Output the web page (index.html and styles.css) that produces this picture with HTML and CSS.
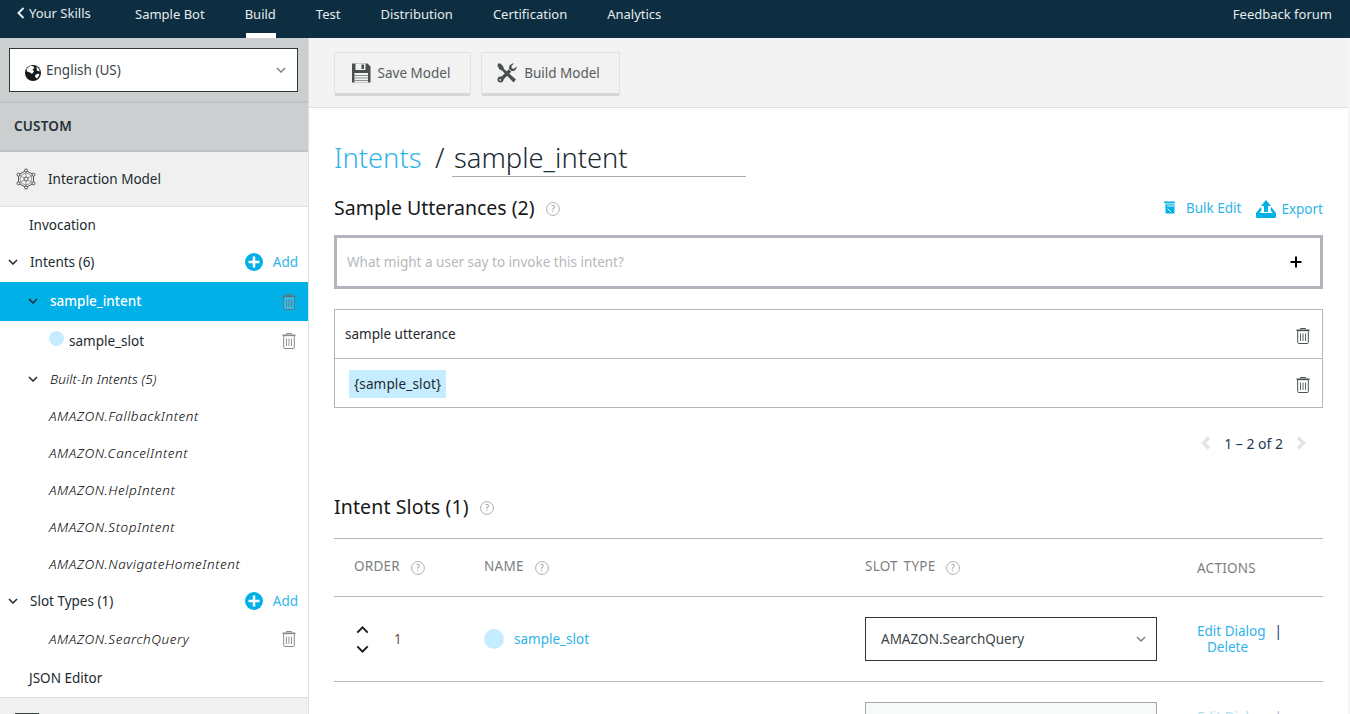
FILE: index.html
```html
<!DOCTYPE html>
<html lang="en">
<head>
<meta charset="utf-8">
<title>Build - Sample Bot</title>
<link rel="stylesheet" href="styles.css">
</head>
<body>
<svg class="defs" width="0" height="0" aria-hidden="true">
  <symbol id="trash" viewBox="0 0 14 16">
    <path d="M4.500 1.500V.5h5v1" fill="none" stroke="currentColor"/>
    <path d="M.5 1.500h13v1.700H.5z" fill="currentColor"/>
    <path d="M1.700 3.200v11.400c0 .5.300.9.900.9h8.800c.6 0 .9-.4.900-.9V3.200" fill="#fff" fill-opacity=".2" stroke="currentColor"/>
    <path d="M4.500 5.500v7.500M7 5.500v7.500M9.500 5.500v7.500" stroke="currentColor" stroke-width=".9"/>
  </symbol>
  <symbol id="chev" viewBox="0 0 10 6">
    <path d="M1 1l4 4 4-4" fill="none" stroke="currentColor" stroke-width="1.500"/>
  </symbol>
  <symbol id="help" viewBox="0 0 14 14">
    <circle cx="7" cy="7" r="6.400" fill="none" stroke="#a9afb0"/>
    <text x="7" y="10" text-anchor="middle" font-size="8.500" font-family="Noto Sans" fill="#8a9091">?</text>
  </symbol>
  <symbol id="addc" viewBox="0 0 18 18">
    <circle cx="9" cy="9" r="9" fill="#00b0e6"/>
    <path d="M9 3.500v11M3.500 9h11" stroke="#fff" stroke-width="2.600"/>
  </symbol>
</svg>

<header class="topbar">
  <a class="back"><svg class="back-chev" viewBox="0 0 8 12"><path d="M6.500 1L1.500 6l5 5" fill="none" stroke="currentColor" stroke-width="2"/></svg>Your Skills</a>
  <a class="tab">Sample Bot</a>
  <a class="tab tab-active">Build</a>
  <a class="tab">Test</a>
  <a class="tab">Distribution</a>
  <a class="tab">Certification</a>
  <a class="tab">Analytics</a>
  <a class="feedback">Feedback forum</a>
</header>

<div class="layout">
  <aside class="sidebar">
    <div class="lang-wrap">
      <div class="lang-select">
        <svg class="globe" viewBox="0 0 16 16"><circle cx="8" cy="8" r="8" fill="#16191a"/><path d="M5.500 .4L8.500 1.500 9.500 3 7.500 4.500 9 6.500 7 9 5 7.500 2 6.500 1.500 4zM10 10l3.500-1.500 1 1.500-2.500 3.500-1.500-1zM11.500 1.500l2.500 2.500.8 2.500-3-1z" fill="#fff"/></svg>
        <span class="lang-text">English (US)</span>
        <svg class="sel-chev"><use href="#chev"/></svg>
      </div>
    </div>
    <div class="custom">CUSTOM</div>
    <div class="model-head">
      <svg class="model-icon" viewBox="0 0 22 22" fill="none" stroke="#3f4445" stroke-width=".9">
        <path d="M11 2.500l7.500 4.200v8.600L11 19.500l-7.500-4.200V6.700z"/>
        <circle cx="11" cy="11" r="2"/>
        <circle cx="11" cy="11" r="5.800" stroke="#8d9192"/>
        <path d="M11 4v5M11 13v5M4.500 7.200l4.800 2.800M12.700 12l4.800 2.800M17.500 7.200L12.700 10M9.300 12l-4.800 2.800" stroke="#8d9192"/>
        <circle cx="11" cy="2.500" r="1.500" fill="#f0f0f0"/><circle cx="11" cy="19.500" r="1.500" fill="#f0f0f0"/>
        <circle cx="3.500" cy="6.700" r="1.500" fill="#f0f0f0"/><circle cx="18.500" cy="6.700" r="1.500" fill="#f0f0f0"/>
        <circle cx="3.500" cy="15.300" r="1.500" fill="#f0f0f0"/><circle cx="18.500" cy="15.300" r="1.500" fill="#f0f0f0"/>
      </svg>
      <span>Interaction Model</span>
    </div>
    <nav class="tree">
      <div class="row row-top row-invoke">Invocation</div>
      <div class="row row-group row-first">
        <svg class="row-chev"><use href="#chev"/></svg><span class="grow">Intents (6)</span>
        <svg class="add-icon"><use href="#addc"/></svg><a class="add">Add</a>
      </div>
      <div class="row row-sel">
        <svg class="row-chev"><use href="#chev"/></svg><span class="grow">sample_intent</span>
        <svg class="trash"><use href="#trash"/></svg>
      </div>
      <div class="row row-slot">
        <span class="dot"></span><span class="grow">sample_slot</span>
        <svg class="trash"><use href="#trash"/></svg>
      </div>
      <div class="row row-sub">
        <svg class="row-chev"><use href="#chev"/></svg><em>Built-In Intents (5)</em>
      </div>
      <div class="row row-leaf"><em>AMAZON.FallbackIntent</em></div>
      <div class="row row-leaf"><em>AMAZON.CancelIntent</em></div>
      <div class="row row-leaf"><em>AMAZON.HelpIntent</em></div>
      <div class="row row-leaf"><em>AMAZON.StopIntent</em></div>
      <div class="row row-leaf"><em>AMAZON.NavigateHomeIntent</em></div>
      <div class="row row-group">
        <svg class="row-chev"><use href="#chev"/></svg><span class="grow">Slot Types (1)</span>
        <svg class="add-icon"><use href="#addc"/></svg><a class="add">Add</a>
      </div>
      <div class="row row-leaf row-tall">
        <em class="grow">AMAZON.SearchQuery</em>
        <svg class="trash"><use href="#trash"/></svg>
      </div>
      <div class="row row-top row-json">JSON Editor</div>
    </nav>
    <div class="side-foot"><span class="foot-icon"></span></div>
  </aside>

  <main class="main">
    <div class="toolbar">
      <button class="btn btn-save">
        <svg class="btn-icon" viewBox="0 0 20 20"><path d="M1 .5h15.500l3 3V19.500H1z" fill="#4a4f50"/><path d="M4.500 .5h10v6.500h-10z" fill="#f2f2f2"/><path d="M10.500 1.500h2.500v4.500h-2.500z" fill="#4a4f50"/><path d="M3.500 10h13.500v9.500H3.500z" fill="#f2f2f2"/><path d="M3.500 12.500h13.500M3.500 15h13.500M3.500 17.500h13.500" stroke="#8a8f90"/></svg>
        Save Model
      </button>
      <button class="btn btn-build">
        <svg class="btn-icon" viewBox="0 0 20 20">
          <path d="M1 .5L3.500 .5 6 3 7 6 19 16.500 16.500 19.500 5 7.500 2.500 6.500 .5 3z" fill="#4a4f50"/>
          <path d="M13 7.500l-9 9" stroke="#4a4f50" stroke-width="3.400"/>
          <circle cx="3.500" cy="16.500" r="3" fill="#4a4f50"/>
          <circle cx="3.200" cy="16.800" r=".9" fill="#f2f2f2"/>
          <path d="M19.500 3.200c.5 2.800-2 5.300-5 4.800l-2.500-2.200c-.4-3 2-5.500 5-5.300l-2.600 2.500.4 2.400 2.400.3z" fill="#4a4f50"/>
        </svg>
        Build Model
      </button>
    </div>
    <div class="content">
      <div class="title-row">
        <a class="crumb">Intents</a>
        <span class="slash">/</span>
        <span class="intent-name">sample_intent</span>
      </div>

      <div class="section-head section-utter">
        <h2>Sample Utterances (2)</h2>
        <svg class="help"><use href="#help"/></svg>
        <span class="spacer"></span>
        <a class="link-act link-bulk">
          <svg class="bulk-icon" viewBox="0 0 13 13"><path d="M.5 .5h11.500L11.500 2.500v10H2.500L2.500 3z" fill="#00b0e6"/><path d="M2.500 2.800h9M4 5h7M4.500 7.500l3.500 3.500" stroke="#fff" stroke-width=".9"/></svg>
          Bulk Edit
        </a>
        <a class="link-act">
          <svg class="export-icon" viewBox="0 0 20 18"><path d="M10 0l5 6h-3v6H8V6H5z" fill="#00b0e6"/><path d="M4.500 7.500L0 13v3.500c0 .8.700 1.500 1.500 1.500h17c.8 0 1.500-.7 1.500-1.500V13l-4.500-5.500h-.8v3l2 2.500h-13.400l2-2.500v-3z" fill="#00b0e6"/></svg>
          Export
        </a>
      </div>

      <div class="utter-input">
        <span class="placeholder">What might a user say to invoke this intent?</span>
        <svg class="plus" viewBox="0 0 12 12"><path d="M6 .5v11M.5 6h11" stroke="#000" stroke-width="2"/></svg>
      </div>

      <div class="utter-list">
        <div class="utter-row">
          <span>sample utterance</span>
          <svg class="trash trash-dark"><use href="#trash"/></svg>
        </div>
        <div class="utter-row">
          <span class="slot-chip">{sample_slot}</span>
          <svg class="trash trash-dark"><use href="#trash"/></svg>
        </div>
      </div>

      <div class="pager">
        <svg class="page-chev" viewBox="0 0 10 14"><path d="M8 1.500L2.500 7 8 12.500" fill="none" stroke="#e2e4e4" stroke-width="3.400"/></svg>
        <span>1 – 2 of 2</span>
        <svg class="page-chev" viewBox="0 0 10 14"><path d="M2 1.500L7.500 7 2 12.500" fill="none" stroke="#e2e4e4" stroke-width="3.400"/></svg>
      </div>

      <div class="section-head section-slots">
        <h2>Intent Slots (1)</h2>
        <svg class="help"><use href="#help"/></svg>
      </div>

      <div class="slots-table">
        <div class="t-row t-head">
          <div class="cell-order th">ORDER<svg class="help help-th"><use href="#help"/></svg></div>
          <div class="th">NAME<svg class="help help-th"><use href="#help"/></svg></div>
          <div class="th th-type">SLOT TYPE<svg class="help help-th"><use href="#help"/></svg></div>
          <div>ACTIONS</div>
        </div>
        <div class="t-row t-body">
          <div class="cell-order cell-num">
            <span class="arrows">
              <svg class="arrow arrow-up"><use href="#chev"/></svg>
              <svg class="arrow"><use href="#chev"/></svg>
            </span>
            <span class="num">1</span>
          </div>
          <div class="cell-name"><span class="dot dot-lg"></span><a class="slot-link">sample_slot</a></div>
          <div>
            <div class="type-select"><span>AMAZON.SearchQuery</span><svg class="sel-chev"><use href="#chev"/></svg></div>
          </div>
          <div class="actions">
            <div><a>Edit Dialog</a><span class="pipe">|</span></div>
            <div class="act-del"><a>Delete</a></div>
          </div>
        </div>
        <div class="t-row t-next">
          <div></div><div></div>
          <div><div class="type-select type-disabled"></div></div>
          <div class="actions actions-off"><div><a>Edit Dialog</a><span class="pipe">|</span></div></div>
        </div>
      </div>
    </div>
  </main>
  <div class="scroll-strip"></div>
</div>
</body>
</html>
```

FILE: styles.css
```css
* { box-sizing: border-box; }
html, body { margin: 0; height: 100%; overflow: hidden; }
body { font-family: "Noto Sans", "Liberation Sans", sans-serif; font-size: 13.500px; color: #1c2a30; background: #fff; }
a { color: inherit; text-decoration: none; }
.defs { position: absolute; }

.topbar { height: 38px; background: #0c2e40; color: #e6ebee; font-size: 13px; display: flex; align-items: flex-start; padding-left: 17px; padding-right: 18px; }
.back { display: flex; align-items: center; width: 118px; height: 26px; }
.back-chev { width: 8px; height: 12px; margin-right: 4px; }
.tab { height: 38px; line-height: 28px; margin-right: 40px; position: relative; }
.tab-active::after { content: ""; position: absolute; left: 1px; right: 0; bottom: 0; height: 5px; background: #fff; }
.feedback { margin-left: auto; line-height: 28px; }

.layout { display: flex; height: 676px; }
.sidebar { width: 309px; flex: none; border-right: 1px solid #dcdedf; display: flex; flex-direction: column; }
.lang-wrap { height: 65px; flex: none; background: #cbcfcf; padding: 10px 10px 0 9px; border-bottom: 2px solid #c0c4c4; }
.lang-select { height: 44px; background: #fff; border: 1px solid #2f3638; display: flex; align-items: center; padding-left: 15px; padding-right: 11px; }
.globe { width: 16px; height: 16px; margin-right: 5px; margin-top: 5px; }
.lang-text { flex: 1; color: #3c4548; }
.sel-chev { width: 10px; height: 6px; color: #7d8385; }
.custom { height: 49px; flex: none; background: #cbcfcf; border-bottom: 2px solid #bfc3c3; font-weight: 600; color: #232f35; line-height: 47px; padding-left: 14px; letter-spacing: .2px; }
.model-head { height: 55px; flex: none; background: #f0f0f0; border-bottom: 1px solid #e2e3e3; display: flex; align-items: center; padding-left: 15px; }
.model-icon { width: 22px; height: 22px; margin-right: 11px; }

.tree { height: 490px; flex: none; }
.row { height: 37px; display: flex; align-items: center; padding-right: 12px; }
.row-top { padding-left: 29px; }
.row-invoke { height: 36px; }
.row-group { height: 38px; padding-left: 8px; padding-right: 10px; }
.row-first { height: 39px; padding-bottom: 1px; }
.row-chev { width: 10px; height: 6px; margin-right: 12px; color: #1c2a30; flex: none; }
.grow { flex: 1; }
.add-icon { width: 18px; height: 18px; margin-right: 10px; }
.add { color: #2fb4e9; }
.row-sel { height: 39px; background: #00b0e6; color: #fff; padding-left: 28px; padding-bottom: 1px; font-weight: 500; }
.row-sel .trash { color: #5d7480; margin-top: 1px; }
.row-slot { height: 39px; padding-left: 49px; padding-top: 1px; }
.row-sub { padding-left: 28px; }
.row-sub em, .row-leaf em { font-weight: 300; color: #000; }
.row-sub em { letter-spacing: .1px; }
.row-leaf { padding-left: 49px; }
.row-leaf em { letter-spacing: .56px; }
.row-tall { height: 38px; }
.row-json { height: 39px; }
.trash { width: 14px; height: 16px; color: #85898b; flex: none; }
.trash-dark { color: #4c5254; margin-top: 3px; }
.dot { width: 15px; height: 15px; border-radius: 50%; background: #c6ecff; margin-right: 5px; margin-top: -5px; flex: none; }
.side-foot { flex: 1; background: #f0f0f0; border-top: 1px solid #dcdedf; padding-left: 15px; padding-top: 15px; }
.foot-icon { display: block; width: 24px; height: 2px; background: #3a3f40; }

.main { flex: 1; min-width: 0; display: flex; flex-direction: column; overflow: hidden; }
.toolbar { height: 70px; flex: none; background: #f3f3f3; border-bottom: 1px solid #dfe0e0; display: flex; gap: 10px; padding: 14px 0 0 25px; }
.btn { height: 44px; background: #f2f2f2; border: 1px solid #e0e1e1; border-bottom: 3px solid #d6d7d7; border-radius: 2px; font: inherit; color: #565c5e; display: flex; align-items: center; justify-content: center; padding: 0 4px 0 0; }
.btn-save { width: 137px; }
.btn-build { width: 139px; }
.btn-icon { width: 20px; height: 20px; margin-right: 7px; }

.content { flex: 1; min-height: 0; padding: 0 25px; }
.title-row { height: 70px; display: flex; align-items: baseline; padding-top: 31px; font-size: 27.300px; font-weight: 300; }
.crumb { color: #2fb4e9; width: 101px; }
.slash { width: 17px; }
.intent-name { width: 294px; height: 38px; border-bottom: 1px solid #a9adb0; padding-left: 2px; }
.section-head { height: 31px; display: flex; align-items: center; }
.section-utter { margin-top: 14px; }
.section-head h2 { margin: 0; font-size: 19.500px; font-weight: 400; color: #16191a; }
.help { width: 14px; height: 14px; margin-left: 11px; margin-top: 3px; }
.spacer { flex: 1; }
.link-act { color: #2fb4e9; display: flex; align-items: center; margin-top: 2px; }
.link-bulk { margin-right: 14px; margin-top: 0; }
.bulk-icon { width: 13px; height: 13px; margin-right: 10px; }
.export-icon { width: 20px; height: 18px; margin-right: 5px; margin-left: 1px; }

.utter-input { height: 54px; margin-top: 12px; border: 3px solid #b4b4bc; display: flex; align-items: center; justify-content: space-between; padding: 0 18px 0 10px; }
.placeholder { color: #b6b8bd; }
.plus { width: 12px; height: 12px; }
.utter-list { margin-top: 20px; border: 1px solid #b4b4bc; }
.utter-row { height: 48px; display: flex; align-items: center; justify-content: space-between; padding: 0 12px 0 10px; }
.utter-row + .utter-row { height: 49px; border-top: 1px solid #b4b4bc; padding-left: 14px; }
.slot-chip { background: #c6ecff; padding: 0 5px; line-height: 28px; height: 28px; margin-top: 2px; letter-spacing: .15px; }
.pager { height: 70px; display: flex; justify-content: flex-end; align-items: center; gap: 13px; padding-right: 17px; color: #1c3a55; font-size: 14px; }
.page-chev { width: 10px; height: 14px; }
.section-slots { margin-top: 13px; }
.section-slots h2 { letter-spacing: .13px; }
.slots-table { margin-top: 16px; border-top: 1px solid #b4b4bc; }
.t-row { display: grid; grid-template-columns: 150px 381px 332px 1fr; align-items: center; border-bottom: 1px solid #b4b4bc; }
.t-head { height: 58px; color: #7b7f80; font-size: 13.500px; letter-spacing: .25px; }
.th { padding-bottom: 4px; }
.th-type { word-spacing: 2px; }
.help-th { margin-left: 11px; margin-bottom: -4px; }
.cell-order { padding-left: 20px; }
.t-body { height: 85px; }
.cell-num { display: flex; align-items: center; padding-left: 22px; }
.arrows { display: flex; flex-direction: column; gap: 11px; width: 38px; }
.arrow { width: 13px; height: 8px; color: #1a1a1a; display: block; }
.arrow-up { transform: rotate(180deg); }
.num { color: #76513c; }
.cell-name { display: flex; align-items: center; }
.dot-lg { width: 20px; height: 20px; margin: 0 10px 0 0; }
.slot-link { color: #2fb4e9; }
.type-select { width: 292px; height: 44px; border: 1px solid #2f3638; display: flex; align-items: center; justify-content: space-between; padding: 0 10px 0 15px; color: #3c4548; }
.actions { color: #2fb4e9; line-height: 16px; }
.pipe { color: #12306b; margin-left: 9px; }
.act-del { padding-left: 10px; }
.t-next { border-bottom: 0; padding-top: 20px; align-items: start; }
.type-disabled { border-color: #a5a8a8; background: #f8fafa; }
.actions-off { opacity: .4; padding-top: 7px; }
.scroll-strip { width: 2px; flex: none; background: #f6f6f6; }
```
